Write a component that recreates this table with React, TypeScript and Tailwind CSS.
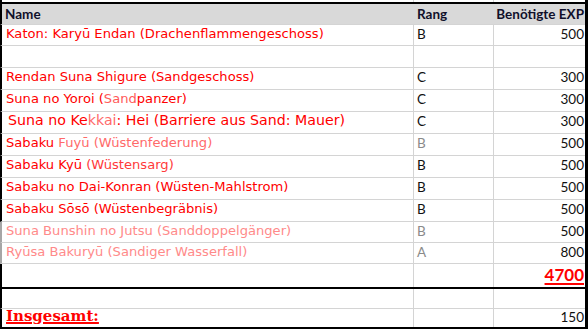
import React from "react";

type RowProps = {
  h: string;
  left?: string;
  bottom?: string;
  name?: React.ReactNode;
  rang?: React.ReactNode;
  exp?: React.ReactNode;
  nameCls?: string;
  rangCls?: string;
  expCls?: string;
};

function Row({
  h,
  left = "border-l-black",
  bottom = "border-b border-b-[#d4d4d4]",
  name,
  rang,
  exp,
  nameCls = "",
  rangCls = "text-[#111]",
  expCls = "text-[#111]",
}: RowProps) {
  return (
    <div className={`flex ${h} border-l-2 ${left} ${bottom}`}>
      <div
        className={`w-[412px] shrink-0 border-r border-r-[#d4d4d4] pl-[4px] flex items-center pb-[3px] whitespace-nowrap font-['DejaVu_Sans',sans-serif] text-[13.1px] text-[#ff0000] ${nameCls}`}
      >
        <span>{name}</span>
      </div>
      <div
        className={`w-[80px] shrink-0 border-r border-r-[#d4d4d4] pl-[3px] flex items-center pb-[2px] font-['Lato',sans-serif] text-[13.5px] ${rangCls}`}
      >
        <span>{rang}</span>
      </div>
      <div
        className={`flex-1 flex items-center justify-end pr-[1px] pb-[2px] font-['Lato',sans-serif] text-[13.5px] ${expCls}`}
      >
        <span>{exp}</span>
      </div>
    </div>
  );
}

export default function App() {
  return (
    <div className="w-[588px] h-[329px] bg-white overflow-hidden">
      <div className="border-r-[3px] border-r-black">
        {/* thin strip above the top border */}
        <div className="flex h-[2px] border-l-2 border-l-black">
          <div className="w-[412px] shrink-0 border-r border-r-[#d4d4d4]" />
          <div className="w-[80px] shrink-0 border-r border-r-[#d4d4d4]" />
          <div className="flex-1" />
        </div>
        <div className="h-[2px] bg-black" />
        {/* header */}
        <div className="flex h-[21px] border-l-2 border-l-black bg-[#d9d9d9] border-b border-b-[#d4d4d4] font-['Lato',sans-serif] font-bold text-[13.5px] text-[#10102a] whitespace-nowrap">
          <div className="w-[412px] shrink-0 pl-[3px] flex items-center">Name</div>
          <div className="w-[80px] shrink-0 pl-[3px] flex items-center">Rang</div>
          <div className="flex-1 flex items-center justify-end pr-[1px]">Benötigte EXP</div>
        </div>

        <Row h="h-[21px]" name="Katon: Karyū Endan (Drachenflammengeschoss)" rang="B" exp="500" />
        <Row h="h-[22px]" />
        <Row h="h-[22px]" name="Rendan Suna Shigure (Sandgeschoss)" rang="C" exp="300" />
        <Row
          h="h-[22px]"
          name={
            <>
              Suna no Yoroi (<span className="text-[#ff5a5a]">Sand</span>panzer)
            </>
          }
          rang="C"
          exp="300"
        />
        <Row
          h="h-[22px]"
          nameCls="text-[14.2px] pl-[6px]"
          name={
            <>
              Suna no Ke<span className="text-[#ff6a6a]">kkai</span>: Hei (Barriere aus Sand: Mauer)
            </>
          }
          rang="C"
          exp="300"
        />
        <Row
          h="h-[22px]"
          name={
            <>
              Sabaku <span className="text-[#ff6a6a]">Fuyū (Wüstenfederung)</span>
            </>
          }
          rang="B"
          rangCls="text-[#8a8a8a]"
          exp="500"
        />
        <Row
          h="h-[22px]"
          name={
            <>
              Sabaku Kyū <span className="text-[#ff3a3a]">(Wüstensarg)</span>
            </>
          }
          rang="B"
          exp="500"
        />
        <Row h="h-[22px]" name="Sabaku no Dai-Konran (Wüsten-Mahlstrom)" rang="B" exp="500" />
        <Row h="h-[22px]" name="Sabaku Sōsō (Wüstenbegräbnis)" rang="B" exp="500" />
        <Row
          h="h-[21px]"
          left="border-l-[#a6a6a6]"
          nameCls="text-[#ff8a8a]"
          name="Suna Bunshin no Jutsu (Sanddoppelgänger)"
          rang="B"
          rangCls="text-[#8a8a8a]"
          exp="500"
        />
        <Row
          h="h-[21px]"
          left="border-l-[#a6a6a6]"
          nameCls="text-[#ff8a8a]"
          name="Ryūsa Bakuryū (Sandiger Wasserfall)"
          rang="A"
          rangCls="text-[#8a8a8a]"
          exp="800"
        />
        <Row
          h="h-[23px]"
          bottom=""
          exp={
            <span className="font-['Lato',sans-serif] font-bold text-[17px] text-[#ff0000] underline decoration-2 underline-offset-[2px]">
              4700
            </span>
          }
        />
        <div className="h-[2px] bg-black" />
        <Row h="h-[20px]" />
        <Row
          h="h-[18px]"
          bottom=""
          name={
            <span className="font-['DejaVu_Serif',serif] font-bold text-[15px] text-[#ff0000] underline decoration-2 underline-offset-[1px]">
              Insgesamt:
            </span>
          }
          exp="150"
        />
        <div className="h-[2px] bg-black" />
      </div>
    </div>
  );
}
